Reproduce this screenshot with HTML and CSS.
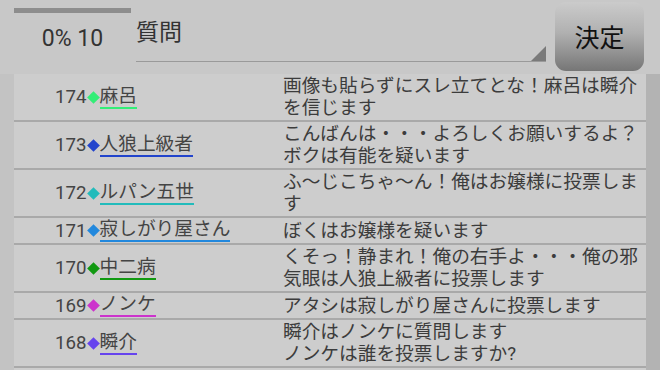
FILE: index.html
```html
<!DOCTYPE html>
<html lang="ja">
<head>
<meta charset="utf-8">
<link rel="stylesheet" href="styles.css">
</head>
<body>
<div class="app">
  <header class="topbar">
    <div class="progress">
      <div class="bar"></div>
      <div class="label">0% 10</div>
    </div>
    <div class="field">
      <span class="placeholder">質問</span>
    </div>
    <button class="submit">決定</button>
  </header>
  <div class="main">
    <div class="gutter-left"></div>
    <ul class="list">
      <li class="row">
        <div class="who"><span class="num">174</span><span class="dia c1"></span><span class="name c1">麻呂</span></div>
        <div class="msg">画像も貼らずにスレ立てとな！麻呂は瞬介を信じます</div>
      </li>
      <li class="row">
        <div class="who"><span class="num">173</span><span class="dia c2"></span><span class="name c2">人狼上級者</span></div>
        <div class="msg">こんばんは・・・よろしくお願いするよ？ボクは有能を疑います</div>
      </li>
      <li class="row">
        <div class="who"><span class="num">172</span><span class="dia c3"></span><span class="name c3">ルパン五世</span></div>
        <div class="msg">ふ～じこちゃ～ん！俺はお嬢様に投票します</div>
      </li>
      <li class="row">
        <div class="who"><span class="num">171</span><span class="dia c4"></span><span class="name c4">寂しがり屋さん</span></div>
        <div class="msg">ぼくはお嬢様を疑います</div>
      </li>
      <li class="row">
        <div class="who"><span class="num">170</span><span class="dia c5"></span><span class="name c5">中二病</span></div>
        <div class="msg">くそっ！静まれ！俺の右手よ・・・俺の邪気眼は人狼上級者に投票します</div>
      </li>
      <li class="row">
        <div class="who"><span class="num">169</span><span class="dia c6"></span><span class="name c6">ノンケ</span></div>
        <div class="msg">アタシは寂しがり屋さんに投票します</div>
      </li>
      <li class="row">
        <div class="who"><span class="num">168</span><span class="dia c7"></span><span class="name c7">瞬介</span></div>
        <div class="msg">瞬介はノンケに質問します<br>ノンケは誰を投票しますか?</div>
      </li>
    </ul>
    <div class="gutter-right"></div>
  </div>
</div>
</body>
</html>
```

FILE: styles.css
```css
html, body {
  margin: 0;
  padding: 0;
  height: 100%;
  overflow: hidden;
}
body {
  background: #c6c6c6;
  font-family: Roboto, "Noto Sans CJK JP", sans-serif;
  color: #404040;
}
.app {
  display: flex;
  flex-direction: column;
  height: 370px;
}
.topbar {
  height: 74px;
  flex: none;
  display: flex;
  align-items: flex-start;
  padding-left: 14px;
  box-sizing: border-box;
  background: #c8c8c8;
}
.progress {
  width: 117px;
  margin-right: 5px;
  padding-top: 8px;
}
.bar {
  height: 5px;
  background: #8d8d8d;
}
.label {
  margin-top: 12px;
  text-align: center;
  font-size: 23px;
  line-height: 28px;
  color: #333;
}
.field {
  position: relative;
  width: 410px;
  height: 62px;
  box-sizing: border-box;
  border-bottom: 1px solid #9a9a9a;
  margin-right: 9px;
  padding-top: 21px;
}
.field::after {
  content: "";
  position: absolute;
  right: 0;
  bottom: 0;
  width: 15px;
  height: 15px;
  background: #7a7a7a;
  clip-path: polygon(100% 0, 100% 100%, 0 100%);
}
.placeholder {
  display: block;
  font-size: 23px;
  line-height: 24px;
  color: #333;
}
.submit {
  width: 89px;
  height: 69px;
  margin-top: 2px;
  border: none;
  border-radius: 11px;
  background: linear-gradient(to bottom, #cbcbcb 0%, #b0b0b0 45%, #767676 100%);
  font-family: Roboto, "Noto Sans CJK JP", sans-serif;
  font-size: 25px;
  color: #111;
  padding: 0 0 2px 0;
}
.main {
  flex: 1;
  display: flex;
  min-height: 0;
}
.gutter-left {
  width: 14px;
  background: #c3c3c3;
}
.gutter-right {
  width: 14px;
  background: #b3b3b3;
}
.list {
  flex: 1;
  margin: 0;
  padding: 0;
  list-style: none;
  background: #cdcdcd;
}
.row {
  display: flex;
  align-items: center;
  padding: 1px 0;
  border-bottom: 2px solid #a9a9a9;
  font-size: 18.7px;
  line-height: 22px;
}
.who {
  width: 269px;
  flex: none;
  box-sizing: border-box;
  padding-left: 41px;
  display: flex;
  align-items: center;
  color: #444;
}
.num {
  line-height: 20px;
}
.dia {
  width: 13px;
  height: 13px;
  position: relative;
  flex: none;
}
.dia::before {
  content: "";
  position: absolute;
  left: 2px;
  top: 2px;
  width: 9px;
  height: 9px;
  transform: rotate(45deg);
  background: currentColor;
}
.name {
  line-height: 21px;
  border-bottom: 2px solid currentColor;
  color: inherit;
}
.name.c1 { border-color: #33ee77; color: #444; }
.name.c2 { border-color: #2244cc; color: #444; }
.name.c3 { border-color: #22bbbb; color: #444; }
.name.c4 { border-color: #2288dd; color: #444; }
.name.c5 { border-color: #119911; color: #444; }
.name.c6 { border-color: #cc33cc; color: #444; }
.name.c7 { border-color: #6644ee; color: #444; }
.dia.c1 { color: #33ee77; }
.dia.c2 { color: #2244cc; }
.dia.c3 { color: #22bbbb; }
.dia.c4 { color: #2288dd; }
.dia.c5 { color: #119911; }
.dia.c6 { color: #cc33cc; }
.dia.c7 { color: #6644ee; }
.msg {
  flex: 1;
  min-width: 0;
  color: #3c3c3c;
}
```
